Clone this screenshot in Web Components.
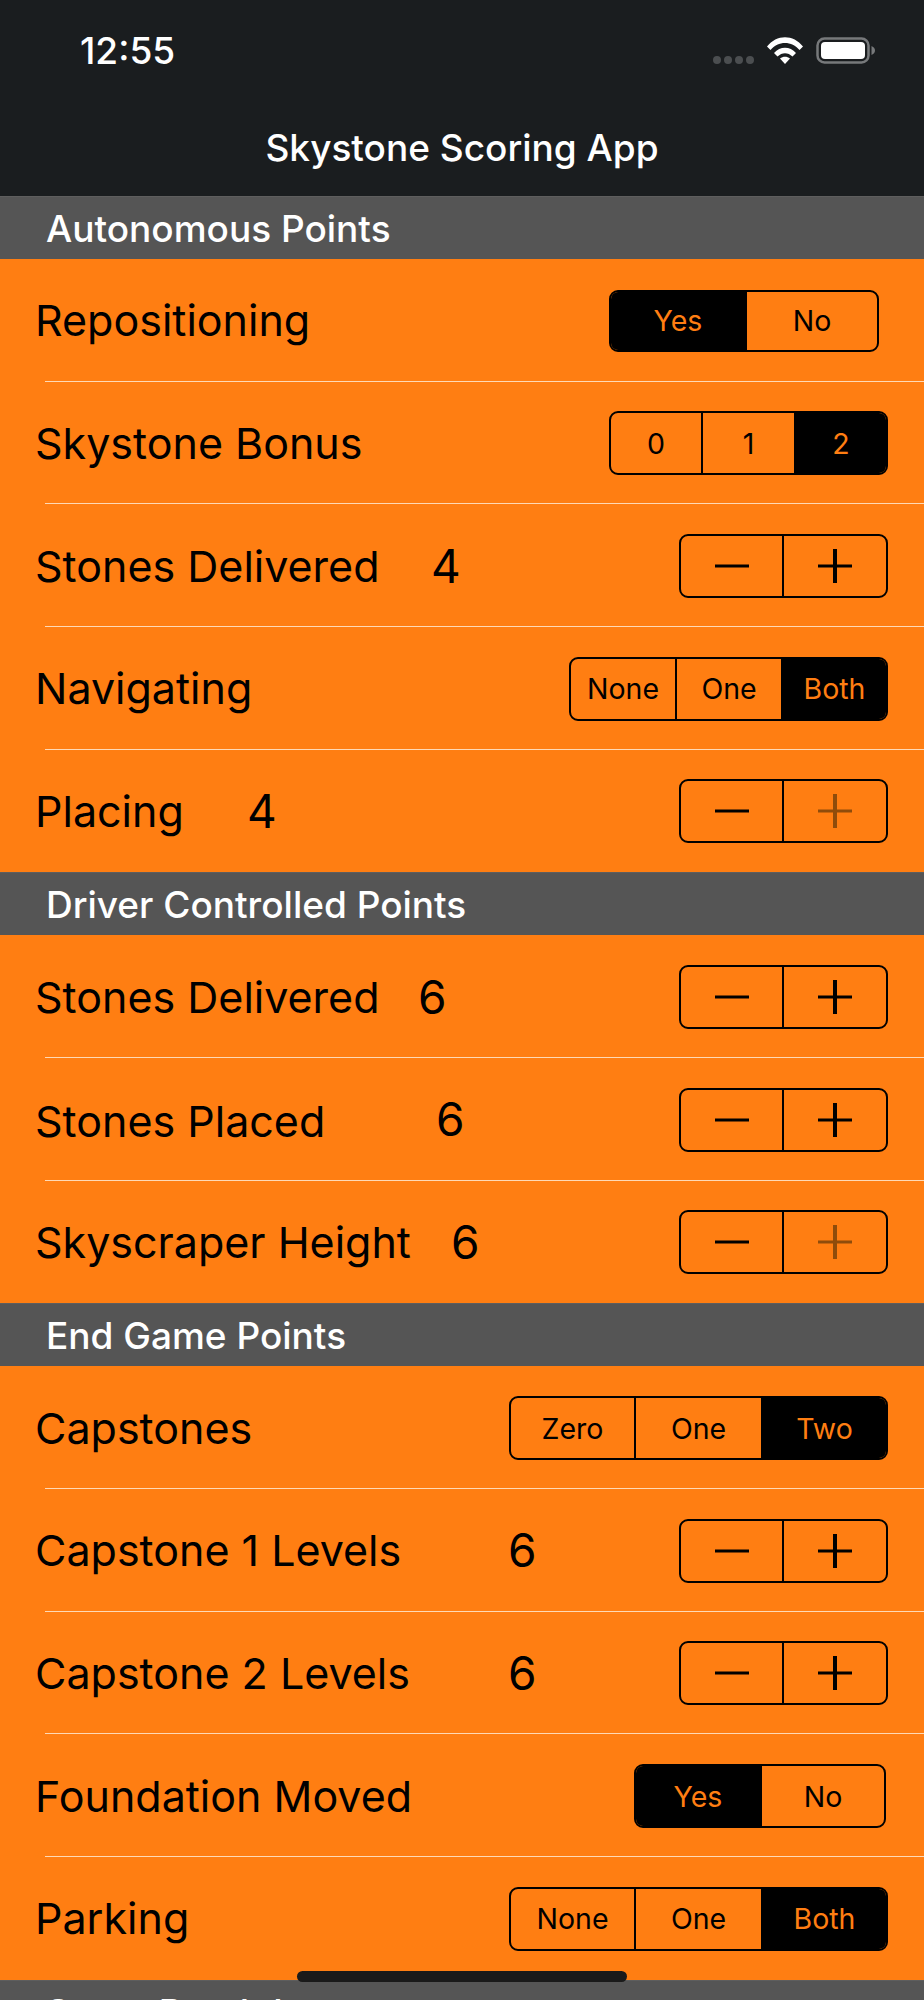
<!DOCTYPE html>
<html>
<head>
<meta charset="utf-8">
<title>Skystone Scoring App</title>
<style>
    html, body {
        margin: 0;
        padding: 0;
        height: 2000px;
        overflow: hidden;
        background: #ff7e12;
        font-family: Inter, "Liberation Sans", sans-serif;
    }
    body { position: relative; }
</style>
</head>
<body>
<sky-header heading="Skystone Scoring App" time="12:55"></sky-header>

<sky-section heading="Autonomous Points">
    <sky-row label="Repositioning">
        <sky-segments options="Yes,No" selected="0" widths="134,132" style="margin-right:9px;height:62px"></sky-segments>
    </sky-row>
    <sky-row label="Skystone Bonus">
        <sky-segments options="0,1,2" selected="2" widths="90,93,92"></sky-segments>
    </sky-row>
    <sky-row label="Stones Delivered" value="4" value-x="431">
        <sky-stepper></sky-stepper>
    </sky-row>
    <sky-row label="Navigating">
        <sky-segments options="None,One,Both" selected="2" widths="104,106,105"></sky-segments>
    </sky-row>
    <sky-row label="Placing" value="4" value-x="247">
        <sky-stepper plus-disabled></sky-stepper>
    </sky-row>
</sky-section>

<sky-section heading="Driver Controlled Points">
    <sky-row label="Stones Delivered" value="6" value-x="418">
        <sky-stepper></sky-stepper>
    </sky-row>
    <sky-row label="Stones Placed" value="6" value-x="436" label-drop>
        <sky-stepper></sky-stepper>
    </sky-row>
    <sky-row label="Skyscraper Height" value="6" value-x="451">
        <sky-stepper plus-disabled></sky-stepper>
    </sky-row>
</sky-section>

<sky-section heading="End Game Points">
    <sky-row label="Capstones">
        <sky-segments options="Zero,One,Two" selected="2" widths="123,127,125"></sky-segments>
    </sky-row>
    <sky-row label="Capstone 1 Levels" value="6" value-x="508">
        <sky-stepper></sky-stepper>
    </sky-row>
    <sky-row label="Capstone 2 Levels" value="6" value-x="508">
        <sky-stepper></sky-stepper>
    </sky-row>
    <sky-row label="Foundation Moved">
        <sky-segments options="Yes,No" selected="0" widths="124,124" style="margin-right:2px"></sky-segments>
    </sky-row>
    <sky-row label="Parking">
        <sky-segments options="None,One,Both" selected="2" widths="123,127,125"></sky-segments>
    </sky-row>
</sky-section>

<sky-section heading="Score Breakdown"></sky-section>

<sky-home-indicator></sky-home-indicator>

<script>
    class SkyHeader extends HTMLElement {
        connectedCallback() {
            const shadow = this.attachShadow({ mode: "open" });
            shadow.innerHTML = `
            <style>
                :host {
                    display: block;
                    height: 196px;
                    box-sizing: border-box;
                    background: #1a1d1f;
                    color: #fff;
                }
                .status {
                    display: flex;
                    align-items: center;
                    justify-content: space-between;
                    height: 100px;
                    padding: 0 48px 0 80px;
                }
                .time { font-size: 37px; font-weight: 500; }
                .icons { display: flex; align-items: center; gap: 13px; }
                .dots { display: flex; gap: 3px; padding-top: 20px; }
                .dots i { width: 8px; height: 8px; border-radius: 50%; background: #4b4e50; }
                svg { display: block; }
                .title {
                    text-align: center;
                    font-size: 37px;
                    font-weight: 500;
                    line-height: 48px;
                    margin-top: 24px;
                }
            </style>
            <div class="status">
                <span class="time">${this.getAttribute("time")}</span>
                <div class="icons">
                    <div class="dots"><i></i><i></i><i></i><i></i></div>
                    <svg width="36" height="27" viewBox="0 0 36 27" fill="#fff">
                        <path d="M0 9.5C9.5 -3 26.5 -3 36 9.5L32.5 13C25 3.5 11 3.5 3.500 13Z"/>
                        <path d="M7 16C13 9 23 9 29 16L25.500 19.500C21 15 15 15 10.500 19.500Z"/>
                        <path d="M13 21.500C16 19 20 19 23 21.500L18 27Z"/>
                    </svg>
                    <svg width="60" height="27" viewBox="0 0 60 27">
                        <rect x="1.500" y="1.500" width="51" height="24" rx="7" fill="none" stroke="#77797b" stroke-width="2.500"/>
                        <rect x="5" y="5" width="44" height="17" rx="4" fill="#fff"/>
                        <path d="M55.500 9C58 10 59 12 59 13.500C59 15 58 17 55.500 18Z" fill="#77797b"/>
                    </svg>
                </div>
            </div>
            <div class="title">${this.getAttribute("heading")}</div>`;
        }
    }

    class SkySection extends HTMLElement {
        connectedCallback() {
            const shadow = this.attachShadow({ mode: "open" });
            shadow.innerHTML = `
            <style>
                :host { display: block; }
                .head {
                    height: 63px;
                    box-sizing: border-box;
                    padding-left: 46px;
                    background: #555555;
                    border-top: 1px solid #5e5e5e;
                    color: #fff;
                    font-size: 37px;
                    font-weight: 500;
                    line-height: 64px;
                    overflow: hidden;
                }
            </style>
            <div class="head">${this.getAttribute("heading")}</div>
            <slot></slot>`;
        }
    }

    class SkyRow extends HTMLElement {
        connectedCallback() {
            const shadow = this.attachShadow({ mode: "open" });
            const value = this.getAttribute("value");
            // value sits at a different x in every row, the label column is as wide as needed
            const valueX = this.getAttribute("value-x");
            const drop = this.hasAttribute("label-drop") ? "4px" : "0";
            shadow.innerHTML = `
            <style>
                :host {
                    display: block;
                    position: relative;
                    height: 122.67px;
                    font-size: 43px;
                    color: #000;
                }
                .row {
                    display: flex;
                    align-items: center;
                    height: 100%;
                    padding: 0 36px 0 35px;
                    box-sizing: border-box;
                }
                .label { flex: none; margin-top: ${drop}; width: ${valueX ? valueX - 35 + "px" : "auto"}; }
                .value { flex: none; font-size: 46px; }
                .control { margin-left: auto; margin-top: 1px; display: flex; }
                .line {
                    position: absolute;
                    left: 45px;
                    right: 0;
                    bottom: 0;
                    height: 1px;
                    background: #ffd9b5;
                }
                :host(:last-of-type) .line { display: none; }
            </style>
            <div class="row">
                <span class="label">${this.getAttribute("label")}</span>
                ${value ? `<span class="value">${value}</span>` : ""}
                <div class="control"><slot></slot></div>
            </div>
            <div class="line"></div>`;
        }
    }

    class SkySegments extends HTMLElement {
        connectedCallback() {
            const shadow = this.attachShadow({ mode: "open" });
            const options = this.getAttribute("options").split(",");
            const widths = this.getAttribute("widths").split(",");
            const selected = parseInt(this.getAttribute("selected"), 10);
            const items = options.map((opt, i) => {
                const cls = i === selected ? "seg on" : "seg";
                return `<div class="${cls}" style="width:${widths[i]}px">${opt}</div>`;
            }).join("");
            shadow.innerHTML = `
            <style>
                :host {
                    display: flex;
                    height: 64px;
                    box-sizing: border-box;
                    border: 2px solid #000;
                    border-radius: 9px;
                    overflow: hidden;
                    font-size: 28.5px;
                    color: #000;
                }
                .seg {
                    box-sizing: border-box;
                    display: flex;
                    align-items: center;
                    justify-content: center;
                    border-left: 2px solid #000;
                }
                .seg:first-of-type { border-left: 0; }
                .on { background: #000; color: #ff7e12; }
            </style>
            ${items}`;
        }
    }

    class SkyStepper extends HTMLElement {
        connectedCallback() {
            const shadow = this.attachShadow({ mode: "open" });
            const plusColor = this.hasAttribute("plus-disabled") ? "#8f4c0b" : "#000";
            shadow.innerHTML = `
            <style>
                :host {
                    display: flex;
                    width: 209px;
                    height: 64px;
                    box-sizing: border-box;
                    border: 2px solid #000;
                    border-radius: 9px;
                }
                .btn { flex: 1; display: flex; align-items: center; justify-content: center; }
                .btn:first-of-type { flex: none; width: 101px; }
                .btn + .btn { border-left: 2px solid #000; }
                svg { display: block; }
            </style>
            <div class="btn">
                <svg width="34" height="34" viewBox="0 0 34 34"><rect x="0" y="15.500" width="34" height="3" fill="#000"/></svg>
            </div>
            <div class="btn">
                <svg width="34" height="34" viewBox="0 0 34 34" fill="${plusColor}">
                    <rect x="0" y="15.500" width="34" height="3"/>
                    <rect x="15" y="0" width="4" height="34"/>
                </svg>
            </div>`;
        }
    }

    class SkyHomeIndicator extends HTMLElement {
        connectedCallback() {
            const shadow = this.attachShadow({ mode: "open" });
            shadow.innerHTML = `
            <style>
                :host {
                    position: absolute;
                    left: 297px;
                    top: 1971px;
                    width: 330px;
                    height: 11px;
                    border-radius: 6px;
                    background: #1a1a1a;
                }
            </style>`;
        }
    }

    customElements.define("sky-header", SkyHeader);
    customElements.define("sky-section", SkySection);
    customElements.define("sky-row", SkyRow);
    customElements.define("sky-segments", SkySegments);
    customElements.define("sky-stepper", SkyStepper);
    customElements.define("sky-home-indicator", SkyHomeIndicator);
</script>
</body>
</html>
